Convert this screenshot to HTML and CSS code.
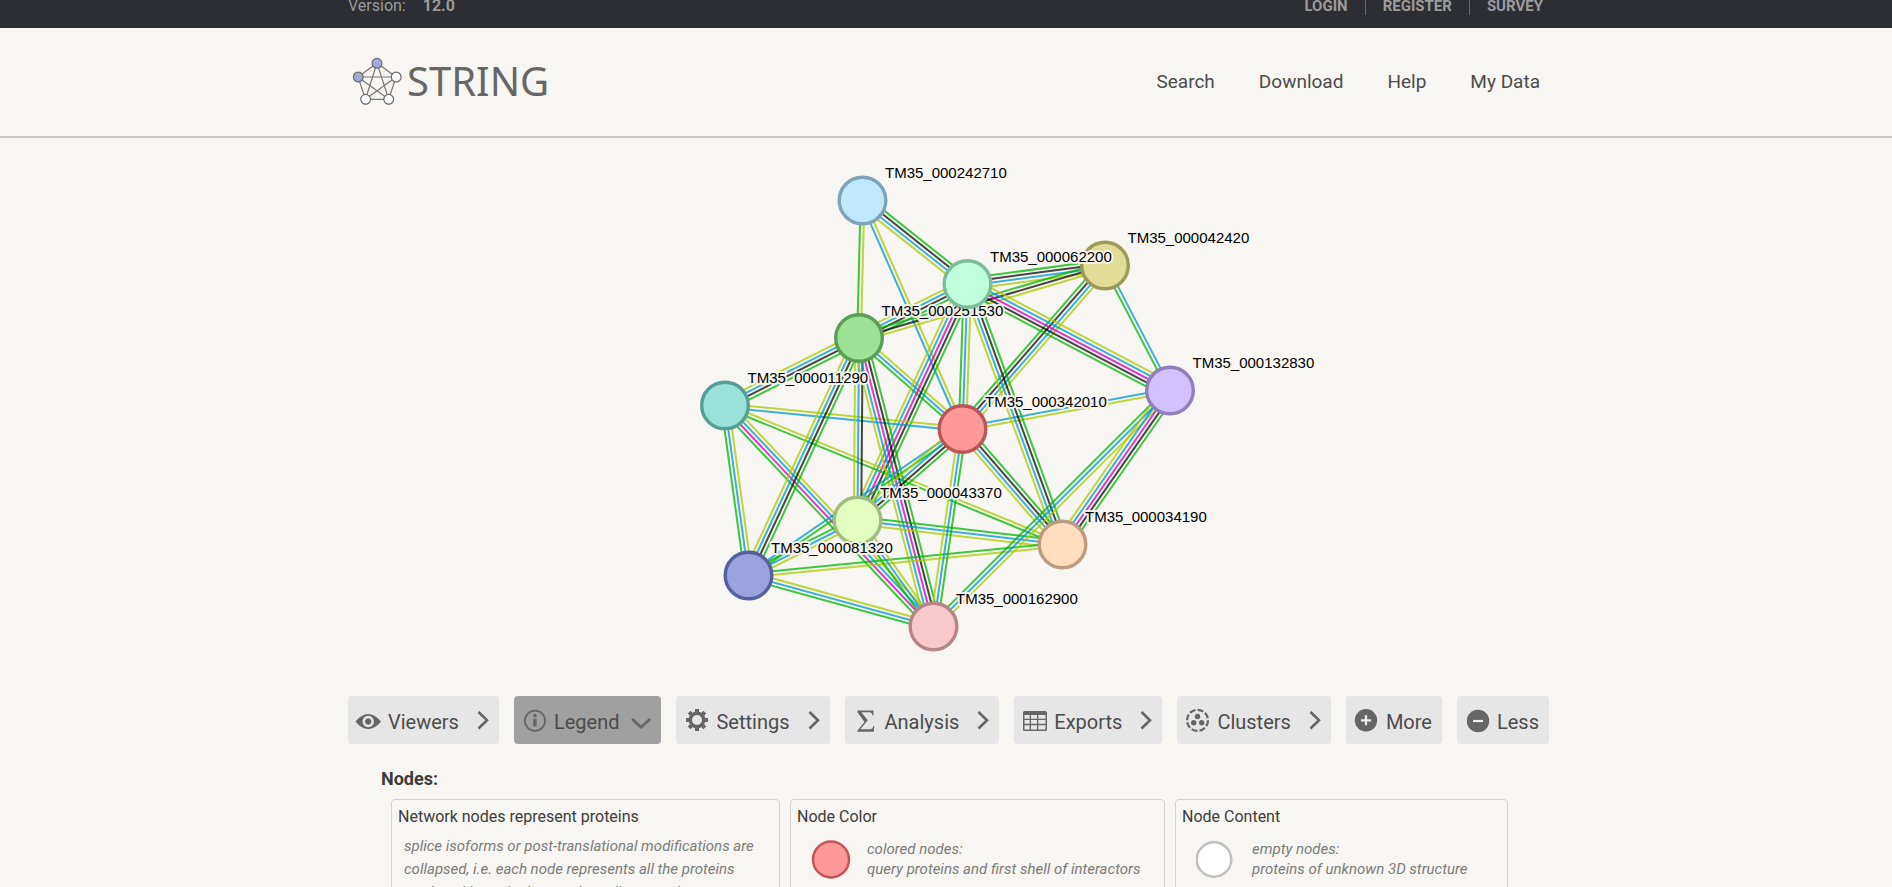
FILE: index.html
```
<!DOCTYPE html>
<html lang="en">
<head>
<meta charset="utf-8">
<title>STRING: protein interaction network</title>
<link rel="stylesheet" href="styles.css">
</head>
<body>
<div class="topbar">
  <div class="wrap topbar-row">
    <div class="version">Version: <strong class="version-number">12.0</strong></div>
    <nav class="account">
      <a class="account-link" href="#login">LOGIN</a>
      <a class="account-link" href="#register">REGISTER</a>
      <a class="account-link" href="#survey">SURVEY</a>
    </nav>
  </div>
</div>
<header class="header">
  <div class="wrap header-row">
    <a class="logo" href="#home">
      <svg class="logo-mark" width="50" height="48" viewBox="352 57 50 48" aria-hidden="true">
        <path class="logo-lines" d="M377 63 358 77 365.500 99.300 388.700 99.300 396 77ZM377 63 365.500 99.300 396 77H358L388.700 99.300Z"/>
        <circle class="logo-dot filled" cx="377" cy="63.300" r="4.900"/>
        <circle class="logo-dot filled" cx="358.300" cy="77" r="4.900"/>
        <circle class="logo-dot" cx="396.200" cy="77" r="4.900"/>
        <circle class="logo-dot" cx="365.600" cy="99.300" r="4.900"/>
        <circle class="logo-dot" cx="388.700" cy="99.300" r="4.900"/>
      </svg>
      <span class="logo-text">STRING</span>
    </a>
    <nav class="menu">
      <a class="menu-link" href="#search">Search</a>
      <a class="menu-link" href="#download">Download</a>
      <a class="menu-link" href="#help">Help</a>
      <a class="menu-link" href="#mydata">My Data</a>
    </nav>
  </div>
</header>
<main>
  <div class="network">
    <svg id="network" class="network-canvas" width="800" height="558" viewBox="546 138 800 558" role="img" aria-label="Protein network"></svg>
  </div>
  <div class="wrap">
    <div class="toolbar">
      <button class="tab" type="button">
        <svg class="icon" width="28" height="28" viewBox="0 0 28 28"><path fill-rule="evenodd" d="M1.500 15.500Q7.500 8 14.200 8T27 15.500Q21 23 14.200 23T1.500 15.500ZM14.200 9.800a5.700 5.700 0 1 0 .01 0ZM14.200 12.300a3.200 3.200 0 1 0 .01 0Z"/></svg>
        <span class="tab-label">Viewers</span>
        <svg class="chevron" width="12" height="20" viewBox="0 0 12 20"><path d="M1.500 2 10 10.300 1.500 18.500"/></svg>
      </button>
      <button class="tab active" type="button">
        <svg class="icon" width="28" height="28" viewBox="0 0 28 28"><circle class="thin" cx="15" cy="14.800" r="10.100"/><circle cx="15" cy="9.700" r="1.900"/><path d="M13.200 12.800H16.700V20.600H13.200Z"/></svg>
        <span class="tab-label">Legend</span>
        <svg class="chevron down" width="20" height="12" viewBox="0 0 20 12"><path d="M1 2 10 10.300 19 2"/></svg>
      </button>
      <button class="tab" type="button">
        <svg class="icon" width="28" height="28" viewBox="0 0 28 28"><circle class="gear-ring" cx="15" cy="14" r="6.700"/><path class="gear-teeth" d="M15 6V3M15 22V25M7 14H4M23 14H26M9.300 8.300 7.200 6.200M20.700 8.300 22.800 6.200M9.300 19.700 7.200 21.800M20.700 19.700 22.800 21.800"/></svg>
        <span class="tab-label">Settings</span>
        <svg class="chevron" width="12" height="20" viewBox="0 0 12 20"><path d="M1.500 2 10 10.300 1.500 18.500"/></svg>
      </button>
      <button class="tab" type="button">
        <svg class="icon" width="28" height="28" viewBox="0 0 28 28"><path d="M6.300 4.500H22.500V9.500H21.500Q21 6.300 18 6.300H10.300L16.800 14.300 9.400 23.300H18.500Q22 23.300 22.300 20H23.300L22.700 25.800H6.300V24.800L13.500 15.900 6.300 6Z"/></svg>
        <span class="tab-label">Analysis</span>
        <svg class="chevron" width="12" height="20" viewBox="0 0 12 20"><path d="M1.500 2 10 10.300 1.500 18.500"/></svg>
      </button>
      <button class="tab" type="button">
        <svg class="icon" width="28" height="28" viewBox="0 0 28 28"><path fill-rule="evenodd" d="M4.500 5H25.500Q27 5 27 6.500V23.500Q27 25 25.500 25H4.500Q3 25 3 23.500V6.500Q3 5 4.500 5ZM4.500 9V12.700H9.700V9ZM11 9V12.700H17V9ZM18.300 9V12.700H25.500V9ZM4.500 14V17.700H9.700V14ZM11 14V17.700H17V14ZM18.300 14V17.700H25.500V14ZM4.500 19.200V23.500H9.700V19.200ZM11 19.200V23.500H17V19.200ZM18.300 19.200V23.500H25.500V19.200Z"/></svg>
        <span class="tab-label">Exports</span>
        <svg class="chevron" width="12" height="20" viewBox="0 0 12 20"><path d="M1.500 2 10 10.300 1.500 18.500"/></svg>
      </button>
      <button class="tab" type="button">
        <svg class="icon" width="28" height="28" viewBox="0 0 28 28"><circle class="dashes" cx="14.500" cy="14.300" r="10.500" pathLength="80"/><circle cx="14.500" cy="10.500" r="2.700"/><circle cx="10.700" cy="16.800" r="2.700"/><circle cx="18.700" cy="16.800" r="2.700"/></svg>
        <span class="tab-label">Clusters</span>
        <svg class="chevron" width="12" height="20" viewBox="0 0 12 20"><path d="M1.500 2 10 10.300 1.500 18.500"/></svg>
      </button>
      <button class="tab" type="button">
        <svg class="icon" width="28" height="28" viewBox="0 0 28 28"><circle cx="14" cy="14.300" r="11.200"/><path class="sign" d="M9 14.300H19M14 9.300V19.300"/></svg>
        <span class="tab-label">More</span>
      </button>
      <button class="tab" type="button">
        <svg class="icon" width="28" height="28" viewBox="0 0 28 28"><circle cx="15" cy="15" r="11.200"/><path class="sign" d="M10 15H20"/></svg>
        <span class="tab-label">Less</span>
      </button>
    </div>
    <section class="legend">
      <h2 class="legend-title">Nodes:</h2>
      <div class="cards">
        <article class="card card-wide">
          <h3 class="card-title">Network nodes represent proteins</h3>
          <p class="card-text">splice isoforms or post-translational modifications are collapsed, i.e. each node represents all the proteins produced by a single, protein-coding gene locus.</p>
        </article>
        <article class="card card-medium">
          <h3 class="card-title">Node Color</h3>
          <div class="sample">
            <svg class="sample-node" width="40" height="40" viewBox="0 0 40 40"><circle cx="20" cy="20.500" r="18" fill="#ff9999" stroke="#c25555" stroke-width="2.500"/></svg>
            <p class="sample-text">colored nodes:<br>query proteins and first shell of interactors</p>
          </div>
        </article>
        <article class="card card-narrow">
          <h3 class="card-title">Node Content</h3>
          <div class="sample">
            <svg class="sample-node" width="40" height="40" viewBox="0 0 40 40"><circle cx="18" cy="20.500" r="17.300" fill="#ffffff" stroke="#c0c0c0" stroke-width="2.500"/></svg>
            <p class="sample-text">empty nodes:<br>proteins of unknown 3D structure</p>
          </div>
        </article>
      </div>
    </section>
  </div>
</main>
<script src="network.js"></script>
</body>
</html>
```
FILE: styles.css
```
* { box-sizing: border-box; }
body {
  margin: 0;
  height: 100vh;
  overflow: hidden;
  background: #f7f6f2;
  color: #4c4c4c;
  font-family: Roboto, "Liberation Sans", sans-serif;
  font-size: 16px;
}
a { color: inherit; text-decoration: none; }
h2, h3, p { margin: 0; }
.wrap { max-width: 1210px; margin: 0 auto; padding-left: 7px; }
.topbar { height: 28px; background: #2d2e33; color: #9b9b9b; }
.topbar-row { display: flex; justify-content: space-between; line-height: 12px; }
.version-number { margin-left: 13px; }
.account { display: flex; padding-right: 8px; font-size: 15px; font-weight: 700; }
.account-link { height: 15px; }
.account-link + .account-link { margin-left: 17px; padding-left: 17px; border-left: 1px solid #6c6c6c; }
.header { height: 110px; border-bottom: 2px solid #c6c5c1; }
.header-row { display: flex; justify-content: space-between; align-items: center; height: 100%; padding-bottom: 2px; }
.logo { display: flex; align-items: center; gap: 5px; padding-left: 4px; }
.logo-lines { fill: none; stroke: #777; stroke-width: 1.2; }
.logo-dot { fill: #fff; stroke: #6b6b6b; stroke-width: 1.2; }
.logo-dot.filled { fill: #a3aad9; }
.logo-text { font-family: "Noto Sans", "Open Sans", sans-serif; font-size: 40px; line-height: 48px; color: #666; }
.menu { display: flex; gap: 44px; padding-right: 11px; font-size: 19px; }
.network { display: flex; justify-content: center; }
.edge { stroke-width: 2; opacity: 0.75; }
.node { stroke-width: 3.4; }
.node-halo { fill: none; stroke: #f7f6f2; stroke-width: 4; stroke-linejoin: round; opacity: 0.9; }
.node-label, .node-halo { font-family: "Liberation Sans", Arial, sans-serif; font-size: 15px; }
.node-label { fill: #000; }
.toolbar { display: flex; gap: 15px; }
.tab {
  display: flex;
  align-items: center;
  height: 48px;
  padding: 0 10px 0 6px;
  border: 0;
  border-radius: 4px;
  background: #e6e6e6;
  color: #4c4c4c;
  font-family: inherit;
  font-size: 20px;
  white-space: nowrap;
}
.tab.active { background: #a0a0a0; }
.icon { fill: #666; flex: none; }
.tab-label { padding: 3px 0 0 6px; }
.chevron { fill: none; stroke: #666; stroke-width: 2.6; flex: none; margin-left: 18px; }
.chevron.down { margin: 6px 0 0 12px; }
.thin { fill: none; stroke: #666; stroke-width: 1.8; }
.gear-ring { fill: none; stroke: #666; stroke-width: 3.4; }
.gear-teeth { stroke: #666; stroke-width: 4; }
.dashes { fill: none; stroke: #666; stroke-width: 2.2; stroke-dasharray: 7.5 2.5; }
.sign { stroke: #f0f0f0; stroke-width: 2.2; }
.legend { padding: 24px 0 0 33px; color: #3c3c3c; }
.legend-title { font-size: 18px; line-height: 22px; }
.cards { display: flex; gap: 10px; padding: 9px 0 0 10px; }
.card { height: 140px; padding: 6px; border: 1px solid #d2d2cf; border-radius: 4px; }
.card-wide { flex: 0 1 389px; }
.card-medium { flex: 0 1 375px; }
.card-narrow { flex: 0 1 333px; }
.card-title { font-size: 16px; font-weight: 400; line-height: 22px; }
.card-text { padding: 7px 6px; font-size: 15px; font-style: italic; line-height: 23px; color: #7b7b7b; }
.sample { display: flex; align-items: center; gap: 16px; padding: 11px 0 0 14px; }
.sample-node { flex: none; }
.sample-text { font-size: 15px; font-style: italic; line-height: 20px; color: #7b7b7b; white-space: nowrap; }
```
FILE: network.js
```
// Draws the interaction network: bundles of evidence lines first, then the nodes with their labels.
const colors = { g: "#00b800", k: "#0a0a0a", b: "#0099cc", y: "#aacc00", m: "#cc00cc" };
const spacing = 3.7;

const nodes = {
  "000242710": [862.5, 200.5, "#c0e8ff", "#7ea4bc"],
  "000042420": [1105, 265.5, "#dfdd97", "#9c9a56"],
  "000132830": [1170, 390.5, "#d3c0ff", "#917ebc"],
  "000011290": [725, 405.5, "#99e1d9", "#569e96"],
  "000251530": [859, 338, "#9de197", "#5a9e55"],
  "000062200": [967.5, 284, "#c0ffdc", "#7ebc99"],
  "000034190": [1062.5, 544.5, "#ffdec0", "#bc9b7e"],
  "000043370": [857.5, 520.5, "#e3ffc0", "#a0bc7e"],
  "000342010": [962.5, 429, "#ff9999", "#bc5656"],
  "000162900": [933.5, 626.5, "#f9c8c8", "#b68585"],
  "000081320": [748.5, 575.5, "#9aa2e0", "#56609e"]
};

// from, to, line colours ordered across the bundle
const edges = [
  ["000242710", "000062200", "gkby"],
  ["000251530", "000242710", "gy"],
  ["000242710", "000342010", "yb"],
  ["000251530", "000062200", "ybkg"],
  ["000062200", "000042420", "gkby"],
  ["000251530", "000042420", "gky"],
  ["000251530", "000342010", "ybg"],
  ["000011290", "000251530", "ybkg"],
  ["000062200", "000342010", "ybg"],
  ["000342010", "000042420", "gkby"],
  ["000042420", "000132830", "bg"],
  ["000062200", "000132830", "ybmkg"],
  ["000342010", "000132830", "by"],
  ["000062200", "000034190", "gkby"],
  ["000043370", "000062200", "ybmkg"],
  ["000342010", "000034190", "gkby"],
  ["000011290", "000342010", "yb"],
  ["000011290", "000034190", "yg"],
  ["000011290", "000162900", "ybmg"],
  ["000011290", "000081320", "ybg"],
  ["000081320", "000251530", "ybkg"],
  ["000251530", "000043370", "kby"],
  ["000251530", "000162900", "gkmby"],
  ["000081320", "000342010", "bg"],
  ["000043370", "000342010", "ybkg"],
  ["000081320", "000043370", "gby"],
  ["000043370", "000034190", "gby"],
  ["000081320", "000034190", "gy"],
  ["000081320", "000162900", "ybg"],
  ["000043370", "000162900", "ybg"],
  ["000342010", "000162900", "gby"],
  ["000162900", "000132830", "gby"],
  ["000034190", "000132830", "ybmkg"]
];

const canvas = document.getElementById("network");

function add(tag, attributes, text) {
  const element = document.createElementNS("http://www.w3.org/2000/svg", tag);
  for (const [key, value] of Object.entries(attributes)) element.setAttribute(key, value);
  if (text) element.textContent = text;
  canvas.appendChild(element);
}

for (const [from, to, lines] of edges) {
  const [x1, y1] = nodes[from];
  const [x2, y2] = nodes[to];
  const length = Math.hypot(x2 - x1, y2 - y1);
  const nx = -(y2 - y1) / length;
  const ny = (x2 - x1) / length;
  [...lines].forEach((line, i) => {
    const shift = (i - (lines.length - 1) / 2) * spacing;
    add("line", {
      class: "edge", stroke: colors[line],
      x1: x1 + nx * shift, y1: y1 + ny * shift,
      x2: x2 + nx * shift, y2: y2 + ny * shift
    });
  });
}

// Each label belongs to its node's layer, so a later node may lie over an earlier label.
for (const [id, [x, y, fill, stroke]] of Object.entries(nodes)) {
  add("circle", { class: "node", cx: x, cy: y, r: 23.3, fill, stroke });
  add("text", { class: "node-halo", x: x + 22.5, y: y - 22.5, "aria-hidden": "true" }, "TM35_" + id);
  add("text", { class: "node-label", x: x + 22.5, y: y - 22.5 }, "TM35_" + id);
}
```
